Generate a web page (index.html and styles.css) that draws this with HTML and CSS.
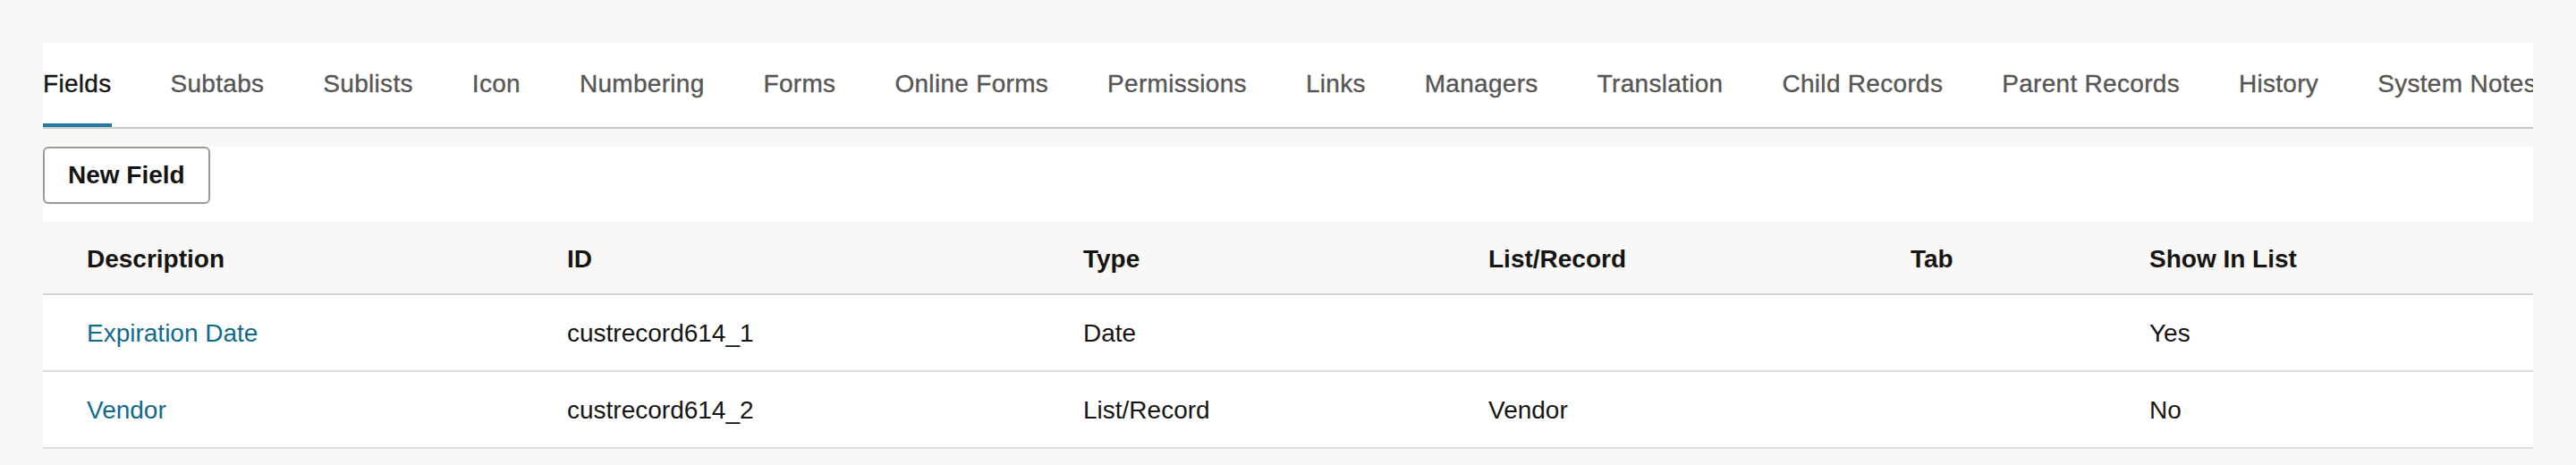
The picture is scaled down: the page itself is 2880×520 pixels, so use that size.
FILE: index.html
```html
<!DOCTYPE html>
<html lang="en">
<head>
<meta charset="utf-8">
<title>Fields</title>
<link rel="stylesheet" href="styles.css">
</head>
<body>
<div class="page">
  <nav class="tabs">
    <a class="tab active">Fields</a>
    <a class="tab">Subtabs</a>
    <a class="tab">Sublists</a>
    <a class="tab">Icon</a>
    <a class="tab">Numbering</a>
    <a class="tab">Forms</a>
    <a class="tab">Online Forms</a>
    <a class="tab">Permissions</a>
    <a class="tab">Links</a>
    <a class="tab">Managers</a>
    <a class="tab">Translation</a>
    <a class="tab">Child Records</a>
    <a class="tab">Parent Records</a>
    <a class="tab">History</a>
    <a class="tab">System Notes</a>
  </nav>
  <div class="toolbar">
    <button class="btn" type="button">New Field</button>
  </div>
  <table class="grid">
    <colgroup>
      <col class="c-desc"><col class="c-id"><col class="c-type"><col class="c-list"><col class="c-tab"><col class="c-show">
    </colgroup>
    <thead>
      <tr><th>Description</th><th>ID</th><th>Type</th><th>List/Record</th><th>Tab</th><th>Show In List</th></tr>
    </thead>
    <tbody>
      <tr><td><a class="link">Expiration Date</a></td><td>custrecord614_1</td><td>Date</td><td></td><td></td><td>Yes</td></tr>
      <tr><td><a class="link">Vendor</a></td><td>custrecord614_2</td><td>List/Record</td><td>Vendor</td><td></td><td>No</td></tr>
    </tbody>
  </table>
</div>
</body>
</html>
```
FILE: styles.css
```css
html, body {
  margin: 0;
  padding: 0;
}
body {
  background: #f9f8f6;
  font-family: "Liberation Sans", Arial, sans-serif;
  font-size: 28px;
  color: #161513;
}
.page {
  padding: 48px 48px 0;
}
.tabs {
  display: flex;
  gap: 66px;
  background: #ffffff;
  border-bottom: 2px solid #cbc7c2;
  overflow: hidden;
  white-space: nowrap;
}
.tab {
  flex-shrink: 0;
  font-size: 28px;
  line-height: 32px;
  letter-spacing: 0.3px;
  padding: 30px 0 28px;
  border-bottom: 4px solid transparent;
  color: #585654;
  -webkit-text-stroke: 0.35px currentColor;
  cursor: pointer;
}
.tab.active {
  color: #161513;
  border-bottom-color: #227b9f;
}
.toolbar {
  margin-top: 20px;
  background: #ffffff;
  padding-bottom: 20px;
}
.btn {
  display: block;
  height: 64px;
  padding: 0 26px;
  border: 2px solid #9d9993;
  border-radius: 6px;
  background: #ffffff;
  font-family: "Liberation Sans", Arial, sans-serif;
  font-size: 28px;
  font-weight: bold;
  color: #161513;
}
.grid {
  width: 100%;
  table-layout: fixed;
  border-collapse: separate;
  border-spacing: 0;
  background: #ffffff;
}
.c-desc { width: 586px; }
.c-id { width: 577px; }
.c-type { width: 453px; }
.c-list { width: 472px; }
.c-tab { width: 267px; }
.grid th {
  background: #f9f8f6;
  text-align: left;
  font-weight: bold;
  line-height: 32px;
  padding: 26px 0 22px;
  border-bottom: 2px solid #d9d6d1;
}
.grid td {
  line-height: 32px;
  padding: 27px 0 25px;
  border-bottom: 2px solid #dedbd7;
  white-space: nowrap;
}
.grid th:first-child,
.grid td:first-child {
  padding-left: 49px;
}
.link {
  color: #0f6a8c;
  cursor: pointer;
}
```
